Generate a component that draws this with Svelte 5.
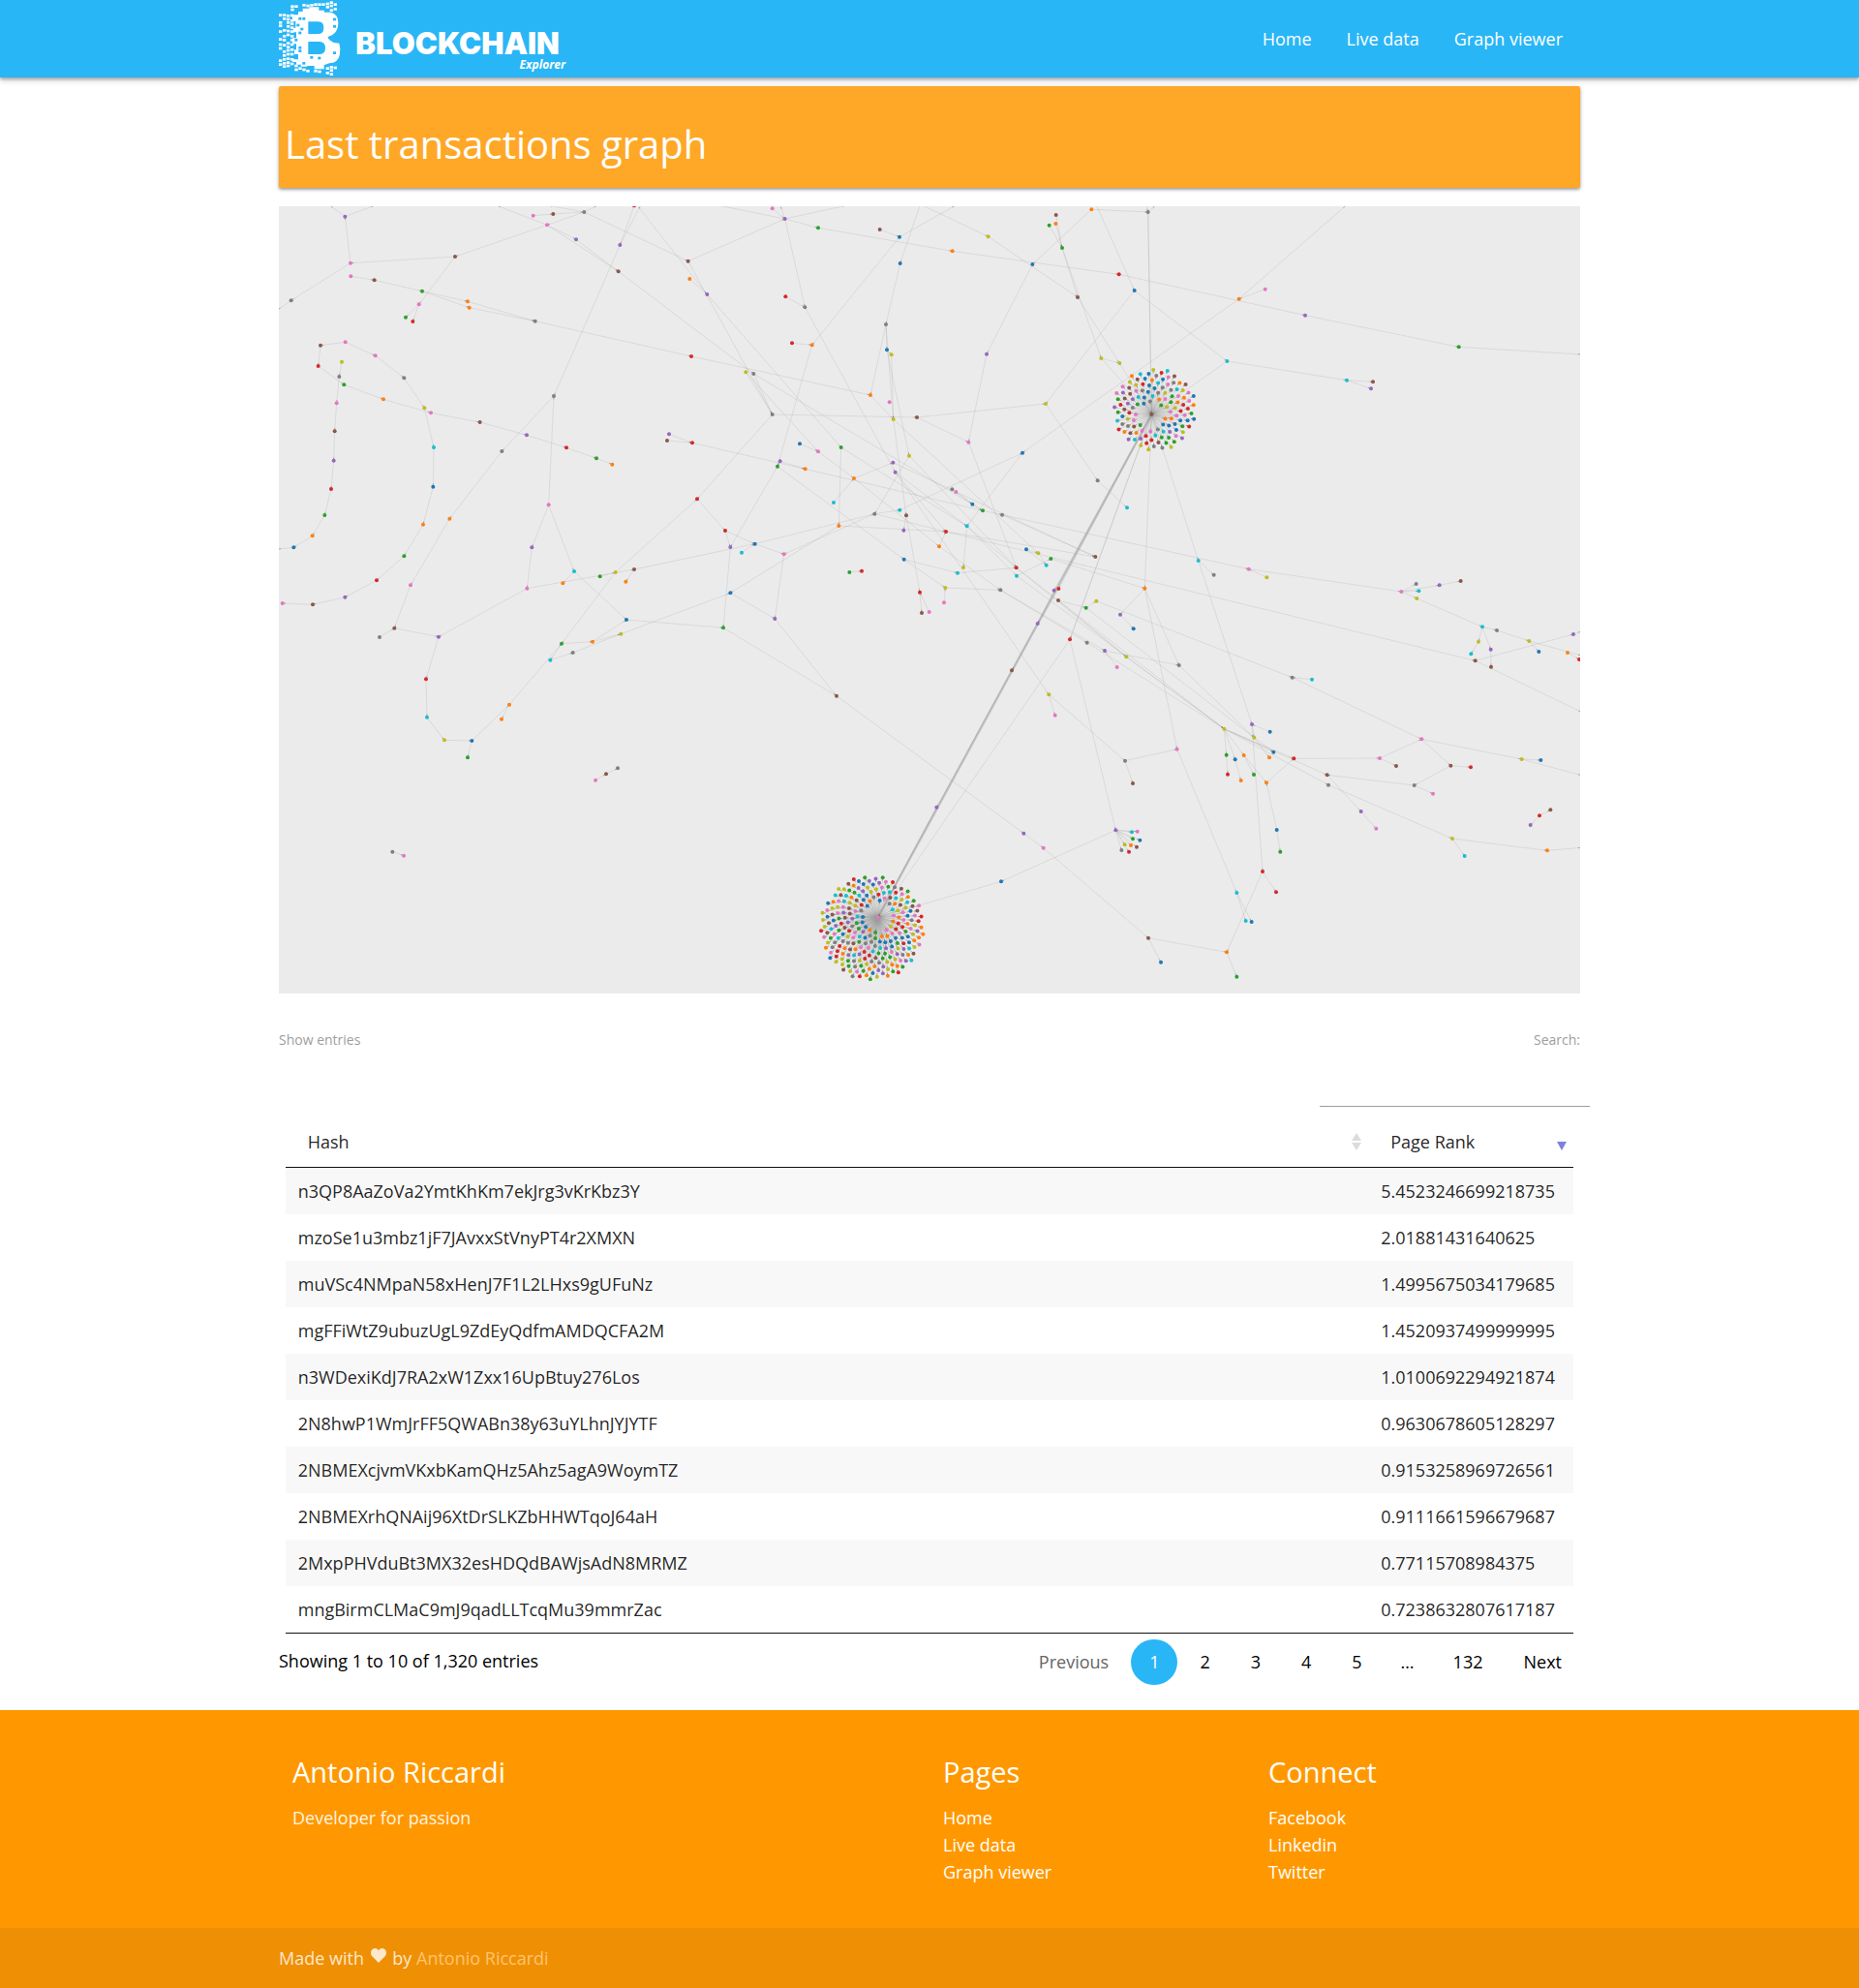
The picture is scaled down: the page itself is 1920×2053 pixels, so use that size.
<script>
  const palette = ['#1f77b4', '#ff7f0e', '#2ca02c', '#d62728', '#9467bd', '#8c564b', '#e377c2', '#7f7f7f', '#bcbd22', '#17becf'];

  // The canvas is kept as six sections; each node is "x,y,colour" within its section.
  const sections = {
    a: { dx: -24, dy: -24, nodes: '229,56,4 246,200,6 62,316,7 570,180,5 855,82,6 812,53,6 874,48,5 970,42,7 945,127,4 1081,144,4 1125,22,3 1076,226,5 1292,194,5 1297,249,1 1351,297,4 247,241,6 320,253,5 468,287,2 609,319,1 614,338,1 458,328,6 417,368,2 439,381,3 818,380,7 1302,489,3 153,455,5 230,445,6 323,487,6 412,556,7 475,649,8 495,664,6 219,506,8 146,519,3 211,552,7 226,577,2 203,634,6 348,622,1 197,721,5 194,812,4 186,900,3 166,981,2 128,1045,1 70,1081,0 504,771,9 502,893,0 471,1010,1 412,1108,2 327,1183,3 229,1235,4 129,1258,5 35,1254,6 647,693,5 792,733,4 915,772,3 1008,805,2 1057,824,1 876,612,7 715,783,7 553,992,1 432,1198,6 860,949,6 808,1081,4 793,1208,6 939,1155,9 904,1192,1 1019,1171,2 1067,1158,8 1125,1149,5 1099,1187,1 1233,730,4 1227,750,5 1305,757,3 1320,931,3' },
    b: { dx: 1356, dy: -24, nodes: '173,31,6 212,63,4 315,91,2 506,96,5 567,119,0 569,201,0 731,163,1 842,118,8 979,204,0 1162,34,1 1052,51,5 1051,78,1 1031,83,2 1071,153,2 1337,42,7 1247,235,3 1295,285,0 1119,306,5 214,304,3 274,337,7 234,448,3 296,454,1 525,390,7 528,469,0 542,484,8 837,482,4 1192,495,8 1249,510,8 91,538,8 115,543,7 173,669,7 477,609,1 536,631,6 548,684,8 621,678,5 1020,636,8 781,755,6 258,760,0 315,784,6 386,771,2 197,814,4 189,830,2 275,838,1 426,867,1 547,818,4 554,848,4 597,797,8 948,788,0 1181,874,7 1272,958,9 363,942,9 379,1014,1 490,977,7 568,965,9 588,982,5 580,1028,4 730,901,7 742,909,6 793,947,0 825,967,2 885,980,7 776,1015,9 711,1032,3 690,1078,1 27,1029,3 43,1080,4 119,1070,0 78,1097,9 209,1102,6 412,1158,2 450,1154,3 581,1118,0 747,1160,9 765,1143,8 960,1087,0 997,1099,8 1036,1116,2 1022,1136,9 929,1144,3 930,1169,9 1174,1110,5 43,1222,0 630,1220,3 709,1206,8 705,1252,6 880,1213,7 1046,1214,4 1060,1209,3 1059,1245,5 1177,1247,8 1327,1208,1 1348,669,5' },
    c: { dx: 2706, dy: -24, nodes: '269,311,1 350,281,6 474,362,4 950,460,2 232,504,9 603,563,9 684,568,5 678,589,4 143,1122,9 191,1166,7 299,1148,6 355,1174,8 772,1218,6 818,1194,7 826,1216,9 820,1239,8 890,1198,4 956,1185,5' },
    d: { dx: -24, dy: 1161, nodes: '382,146,5 336,174,7 519,173,4 480,304,3 483,422,9 537,493,8 622,495,0 609,547,2 738,383,1 714,428,1 900,194,2 865,245,9 935,222,7 996,188,1 1084,164,8 1101,120,0 1005,617,6 1038,598,5 1074,580,7 376,839,7 411,851,6' },
    e: { dx: 1356, dy: 1161, nodes: '21,145,2 181,117,4 372,356,5 636,99,5 659,96,6 995,132,4 915,277,5 682,701,4 500,1042,6 1095,181,3 1145,83,2 1148,191,7 1203,216,4 1241,267,6 1270,235,8 1251,104,4 1292,148,0 1030,352,8 1049,416,6 1266,557,7 1290,627,5 1237,772,4 1287,778,9 1304,776,6 1290,799,2 1312,803,0 1265,817,8 1284,819,1 1302,824,5 1255,834,7 1278,839,3 882,931,0 952,782,4 1013,827,6 1338,1106,5 1377,1181,0' },
    f: { dx: 2706, dy: 1161, nodes: '83,261,7 223,458,8 309,444,4 365,467,0 316,485,8 376,530,0 363,547,1 284,540,1 230,539,2 257,553,0 234,599,3 275,618,1 315,600,2 354,625,1 439,550,3 77,521,6 262,966,9 290,1053,9 308,1056,0 342,900,3 384,964,3 386,771,0 397,839,2 231,1150,1 262,1226,2 542,601,5 546,632,7 647,714,4 694,767,6 705,549,6 756,573,5 812,633,7 870,659,6 925,572,5 987,577,3 835,490,6 1145,552,8 1204,555,0 930,798,8 968,852,9 1224,835,1 1200,727,3 1234,709,5 1172,756,4 434,299,7 495,305,9 1023,142,9 1068,153,7 1011,188,8 988,226,9 1001,247,5 1049,212,4 1050,266,5 1168,186,8 1198,219,0 1287,222,1 1323,243,3 1305,165,4' }
  };

  // Each entry is a chain of nodes; "a:x:y" is a bare point, used where a link leaves the canvas.
  const chains = `a1>a0>a:183:22 a0>a:320:22 a3>a1>a2>a:20:345 a4>a3>a20>a21 a20>a22 a7>a4>a8>a11 a4>a11 a4>a:700:22 a5>a6>a7>a:1010:22 a7>a:860:22 a7>a12 a9>a:1145:22 a10>a9>a56
    a:1135:22>a14>b39 a12>b30 a11>b29 a12>b1 a13>a14 a15>a16>a17>a18>a23>a24>b31 a17>a19>a23 a60>a56>a57>a58>a59>d0 a60>a61>a62>d2 a62>a67>b66>b52 a60>a63>a64 a63>d15 a65>a66>a72 a66>d10 a67>a68
    a70>a71>b42 a69>a71 b30>a72>b64 a26>a25>a32>a34>a36>a30>a51>a52>a53>a54>a55 a26>a27>a28>a29>a43>a44>a45>a46>a47>a48>a49>a50 a31>a33>a35>a37>a38>a39>a40>a41>a42>a:20:1086
    b0>b1>b:198:22 b1>b:-60:8 b1>b:400:22 b1>b2>b6>b15>c2>c3>c:1330:483 b1>b19 b3>b4>b21>b41 b4>b:740:22 b:630:22>b5>b22 b:640:22>b7>b17 b9>b8>b25>b36 b9>b14 b14>c:10:22 b14>b91 b14>b91 b:1333:22>b14
    b10>b13 b11>b13 b12>b13>b17>b27 b13>b26>b27>b91 b26>b91 b:1178:22>b16>b35>b48>b49 b16>c4>b91 c4>c5>c6 c5>c7 b18>b19>b45 b20>b21 b22>b23>b24>b33 b22>b31>b33 b22>b33 b23>b46 b28>b30 b29>b30 b28>b38 b29>b59
    b30>b34>b35 b33>b75 b34>b36>b78 b37>b38>b43>b63 b39>b51 b39>b61 b40>b42>b59 b40>b41>b71 b41>b65 b50>b43>b44>b80 b45>b62 b45>b61 b46>b52 b46>b78 b53>b47>b61 b52>b53 b51>b62 b51>b81 b52>b62 b52>b68 b33>b54>b55 b54>b82
    b56>b58 b57>b58>b59>b60>b80 b60>c10 b61>b73 b61>b78 b61>b79 b63>b62>b80 b62>f50 b64>b65>e0 b64>b66>b68>e1 b67>b66 b69>b70 b71>b72>b78 b71>b83 b63>b85 b74>b75>b77 b74>b77 b79>b76>b90 b78>e14 b79>f1 b78>f1 b84>b83>b85>e11 b85>e12 e4>b82>e3
    b91>b90>e15>e16 b90>f15 b90>f0 b91>c8>c9 c8>f2 c1>c0>c:600:22 c0>b47 c11>c10>c12>c13 c12>c14 c12>c15>f46 c12>c16>c17
    d1>d0>d2>d3>d4>d5>d6>d8>d10>d13>d15 d6>d7 d8>d9 d13>d14>b81 d11>d12>d14 d10>d11 d15>e0>e2>e32>e33>e34>e35 d16>d17>d18 d19>d20 b81>e1>e2 e34>f23 e9>e8 b91>e9 b91>e9>e21>e31>e8 e21>e22 e21>e23 e21>e24 e21>e25 e21>e26 e21>e27 e21>e28 e21>e29 e21>e30
    b88>e10>b89>f44 e10>f4 e11>f1 e13>e12>f0>f4 e14>f1 b88>e14 b45>e17>e18 e17>e19>e20 e19>f15>f16>f17 f16>f18
    f1>f8>f10 f1>f9>f11 f1>f7>f12 f7>f13 f1>f14 f1>f5 f1>f25 f1>f26 f3>f2>f4>f5 f4>f6 f2>f19>f20 f21>f13>f14>f29>f35>f33>f31>f25>f27>f28 f21>f22 f29>f30 f33>f34 f31>f32 f26>f38>f40>f:1330:826 f38>f39 f35>f36>f37 f36>f:1330:602 f45>f44>f35
    f46>f47>f53>f:1330:231 f46>f48>f49 f46>f51>f52 f53>f54 f55>f56 f50>f57>f:1330:156 f50>f:1330:406 f19>f23>f24 f41>f42 f41>f43
    b91>b86 b91>b87 b91>e5 b86>e5>e6>e7>e8 e6>e8 e7>e8 b87>e6`;

  const byId = {};
  const nodes = [];
  for (const [key, { dx, dy, nodes: list }] of Object.entries(sections)) {
    list.split(' ').forEach((item, i) => {
      const [x, y, c] = item.split(',').map(Number);
      byId[key + i] = { x: x + dx, y: y + dy, c };
      nodes.push(byId[key + i]);
    });
  }

  function point(token) {
    if (!token.includes(':')) return byId[token];
    const [key, x, y] = token.split(':');
    return { x: +x + sections[key].dx, y: +y + sections[key].dy };
  }

  const links = [];
  for (const chain of chains.split(/\s+/)) {
    const stops = chain.split('>').map(point);
    for (let i = 1; i < stops.length; i++) links.push([stops[i - 1], stops[i]]);
  }

  // Leaves around a busy address, spread in a sunflower spiral.
  function burst(hub, cx, cy, radius, step, clear) {
    const leaves = [];
    const count = Math.floor((radius / step) ** 2);
    for (let i = 1; i < count; i++) {
      const r = step * Math.sqrt(i);
      const t = i * 2.39996;
      const shade = Math.floor(Math.abs(Math.sin(i * 78.233) * 4375.85)) % 10;
      const leaf = { x: cx + r * Math.cos(t), y: cy + r * Math.sin(t), c: shade };
      if (Math.hypot(leaf.x - hub.x, leaf.y - hub.y) > clear) leaves.push(leaf);
    }
    for (const leaf of leaves) links.push([hub, leaf]);
    nodes.push(...leaves);
  }
  burst(byId.b91, 2713, 630, 129, 11, 40);
  burst(byId.e8, 1838, 2236, 162, 10, 44);

  const linkPath = links.map(([s, t]) => `M${s.x} ${s.y}L${t.x} ${t.y}`);
  const arrows = links
    .map(([s, t]) => {
      const d = Math.hypot(t.x - s.x, t.y - s.y) || 1;
      const ux = (t.x - s.x) / d;
      const uy = (t.y - s.y) / d;
      return `M${(t.x - ux * 10).toFixed(1)} ${(t.y - uy * 10).toFixed(1)}L${(t.x - ux * 5).toFixed(1)} ${(t.y - uy * 5).toFixed(1)}`;
    })
    .join('');

  const rows = [
    ['n3QP8AaZoVa2YmtKhKm7ekJrg3vKrKbz3Y', '5.4523246699218735'],
    ['mzoSe1u3mbz1jF7JAvxxStVnyPT4r2XMXN', '2.01881431640625'],
    ['muVSc4NMpaN58xHenJ7F1L2LHxs9gUFuNz', '1.4995675034179685'],
    ['mgFFiWtZ9ubuzUgL9ZdEyQdfmAMDQCFA2M', '1.4520937499999995'],
    ['n3WDexiKdJ7RA2xW1Zxx16UpBtuy276Los', '1.0100692294921874'],
    ['2N8hwP1WmJrFF5QWABn38y63uYLhnJYJYTF', '0.9630678605128297'],
    ['2NBMEXcjvmVKxbKamQHz5Ahz5agA9WoymTZ', '0.9153258969726561'],
    ['2NBMEXrhQNAij96XtDrSLKZbHHWTqoJ64aH', '0.9111661596679687'],
    ['2MxpPHVduBt3MX32esHDQdBAWjsAdN8MRMZ', '0.77115708984375'],
    ['mngBirmCLMaC9mJ9qadLLTcqMu39mmrZac', '0.7238632807617187']
  ];

  const pages = ['Home', 'Live data', 'Graph viewer'];
  const social = ['Facebook', 'Linkedin', 'Twitter'];

  // Loose pixels of the logo mark: "x,y" of each square's corner.
  const bits = '61,16 73,16 61,26 97,12 109,14 121,12 133,10 145,10 157,10 170,8 182,4 194,10 170,18 182,14 194,24 182,28 24,43 36,43 48,45 36,54 48,56 60,44 24,66 24,76 48,66 60,60 60,70 48,78 36,90 24,94 60,82 48,92 60,94 48,104 36,108 60,108 24,118 36,120 60,120 48,130 24,134 36,136 24,146 48,142 60,134 36,156 48,152 60,150 36,168 48,164 60,164 24,184 36,180 48,178 24,196 36,192 48,190 60,180 36,202 48,200 60,194 73,200 73,212 85,208 97,212 109,216 133,216 145,218 170,208 182,204 194,206 170,222 182,226 182,214'.split(' ').map((b) => b.split(',').map(Number));
  const holes = '85,54 97,54 192,56 192,78 79,74 91,86 85,98 85,144 85,154 73,172 97,192 121,174 145,176 192,160 73,120'.split(' ').map((b) => b.split(',').map(Number));
</script>

<header>
  <nav class="container">
    <a class="brand" href="#home" aria-label="Blockchain Explorer">
      <svg viewBox="24 0 900 240" width="300" height="80">
        <g fill="#fff">
          <path d="M66 46H84V36H98V26H118V22H148V32H165V38H186Q208 44 208 72Q208 106 176 114Q174 122 194 132L211 134Q216 150 213 168Q208 196 180 196L164 202V214H134V204H112V206H92V200H78V192H66V184H84V168H72V154H78V136H66V118H78V100H68V86H76V66H66Z" />
          {#each bits as [x, y]}<rect {x} {y} width="10" height="8" />{/each}
        </g>
        <g fill="#29b6f6">
          <path d="M115 67H146Q163 67 163 86Q163 105 146 105H115ZM115 129H150Q168 129 168 149Q168 168 148 168H115Z" />
          {#each holes as [x, y]}<rect {x} {y} width="9" height="8" />{/each}
        </g>
        <text class="word" x="262" y="168">BLOCKCHAIN</text>
        <text class="sub" x="912" y="212">Explorer</text>
      </svg>
    </a>
    <ul>
      {#each pages as page}<li><a href="#{page.replace(' ', '-')}">{page}</a></li>{/each}
    </ul>
  </nav>
</header>

<main class="container">
  <section class="card"><h1>Last transactions graph</h1></section>

  <svg class="graph" viewBox="0 0 4032 2439" role="img" aria-label="Graph of the last transactions">
    <g class="links">{#each linkPath as d}<path {d} />{/each}</g>
    <path class="trunk" d="M2704 645L1856 2203" />
    <path class="arrows" d={arrows} />
    {#each nodes as n}<circle cx={n.x} cy={n.y} r="6" fill={palette[n.c]} />{/each}
  </svg>

  <div class="controls">
    <p>Show entries</p>
    <div class="search">
      <label for="search">Search:</label>
      <input id="search" type="search" />
    </div>
  </div>

  <table>
    <thead>
      <tr>
        <th>
          <button>Hash
            <svg width="10" height="18" viewBox="0 0 10 18"><path fill="#dcdcdc" d="M5 0L10 8H0ZM0 10H10L5 18Z" /></svg>
          </button>
        </th>
        <th class="rank" aria-sort="descending">
          <button>Page Rank
            <svg width="10" height="18" viewBox="0 0 10 18"><path fill="#7b80e0" d="M0 9H10L5 18Z" /></svg>
          </button>
        </th>
      </tr>
    </thead>
    <tbody>
      {#each rows as [hash, rank]}<tr><td>{hash}</td><td>{rank}</td></tr>{/each}
    </tbody>
  </table>

  <div class="summary">
    <p>Showing 1 to 10 of 1,320 entries</p>
    <div class="pager">
      <button disabled>Previous</button>
      <button class="current" aria-current="page">1</button>
      <button>2</button>
      <button>3</button>
      <button>4</button>
      <button>5</button>
      <span>…</span>
      <button>132</button>
      <button>Next</button>
    </div>
  </div>
</main>

<footer>
  <div class="container columns">
    <div>
      <h2>Antonio Riccardi</h2>
      <p>Developer for passion</p>
    </div>
    <div>
      <h2>Pages</h2>
      <ul>{#each pages as page}<li><a href="#{page.replace(' ', '-')}">{page}</a></li>{/each}</ul>
    </div>
    <div>
      <h2>Connect</h2>
      <ul>{#each social as name}<li><a href="#{name}">{name}</a></li>{/each}</ul>
    </div>
  </div>
  <div class="copyright">
    <p class="container">
      Made with
      <svg width="16" height="15" viewBox="0 0 16 15" role="img" aria-label="love"><path d="M8 15L1.4 8.3Q0 6.700 0 4.500Q.2.500 4.200 0Q6.800 0 8 2.200Q9.200 0 11.800 0Q15.800.500 16 4.500Q16 6.700 14.600 8.300Z" /></svg>
      by <a href="#author">Antonio Riccardi</a>
    </p>
  </div>
</footer>

<style>
  :global(body) {
    font: 18px/28px 'Open Sans', 'Noto Sans', sans-serif;
    color: #000;
    background: #fff;
  }
  h1, h2, p, ul { margin: 0; padding: 0; font-weight: 400; }
  ul { list-style: none; }
  a { color: inherit; text-decoration: none; }
  button { font: inherit; color: inherit; background: none; border: 0; padding: 0; cursor: pointer; }
  .container { width: 70%; margin: 0 auto; }

  header {
    background: #29b6f6;
    color: #fff;
    box-shadow: 0 2px 3px rgba(0, 0, 0, 0.28), 0 4px 6px rgba(0, 0, 0, 0.12);
  }
  nav { display: flex; justify-content: space-between; }
  nav ul { display: flex; }
  nav li a { display: block; padding: 0 18px; line-height: 80px; }
  .brand svg { display: block; }
  .word { font: 900 93px Inter, sans-serif; fill: #fff; }
  .sub { font: italic 700 36px 'Open Sans', sans-serif; fill: #fff; text-anchor: end; }

  .card {
    margin-top: 9px;
    padding: 36px 6px 21px;
    background: #ffa726;
    color: #fff;
    border-radius: 2px;
    box-shadow: 0 2px 3px rgba(0, 0, 0, 0.28), 0 1px 5px rgba(0, 0, 0, 0.16);
  }
  h1 { font-size: 40px; line-height: 48px; }

  .graph { display: block; width: 100%; margin-top: 19px; background: #ebebeb; }
  .links { stroke: #999; stroke-opacity: 0.22; stroke-width: 3; fill: none; }
  .trunk { stroke: #999; stroke-opacity: 0.5; stroke-width: 7; }
  .arrows { stroke: #555; stroke-opacity: 0.45; stroke-width: 3; fill: none; }

  .controls {
    display: flex;
    justify-content: space-between;
    margin-top: 37px;
    font-size: 14px;
    line-height: 22px;
    color: #9e9e9e;
  }
  .search { display: flex; flex-direction: column; align-items: flex-end; }
  .search input {
    box-sizing: border-box;
    width: 279px;
    height: 58px;
    margin-right: -10px;
    padding: 0;
    border: 0;
    border-bottom: 1px solid #9e9e9e;
    background: transparent;
    font: inherit;
    outline: 0;
  }

  table {
    width: 99%;
    margin: 7px auto 0;
    border-collapse: separate;
    border-spacing: 0;
    border-bottom: 1px solid #111;
    color: rgba(0, 0, 0, 0.87);
  }
  th { padding: 15px 7px 12px 23px; border-bottom: 1px solid #111; font-weight: 400; text-align: left; }
  th button { display: flex; width: 100%; justify-content: space-between; align-items: center; }
  .rank { width: 182px; }
  td { padding: 12px 13px; line-height: 24px; }
  tbody tr:nth-child(odd) { background: #f8f8f8; }

  .summary { display: flex; justify-content: space-between; align-items: flex-start; padding: 6px 0 26px; }
  .summary p { margin-top: 8px; }
  .pager { display: flex; gap: 4px; }
  .pager button { padding: 0 19px; line-height: 47px; }
  .pager button:disabled { color: #666; }
  .pager .current { background: #29b6f6; color: #fff; border-radius: 24px; }
  .pager span { width: 48px; line-height: 47px; text-align: center; }

  footer { background: #ff9800; color: #fff; }
  .columns { display: grid; grid-template-columns: 2fr 1fr 1fr; padding: 47px 0 44px; }
  .columns > div { padding-left: 14px; }
  h2 { font-size: 29px; line-height: 34px; margin-bottom: 16px; }
  .columns p { color: #fff3e0; }
  .copyright { background: rgba(51, 51, 51, 0.08); color: rgba(255, 255, 255, 0.8); line-height: 62px; }
  .copyright svg { fill: currentColor; vertical-align: 2px; margin: 0 2px; }
  .copyright a { color: #ffc36f; }
</style>
